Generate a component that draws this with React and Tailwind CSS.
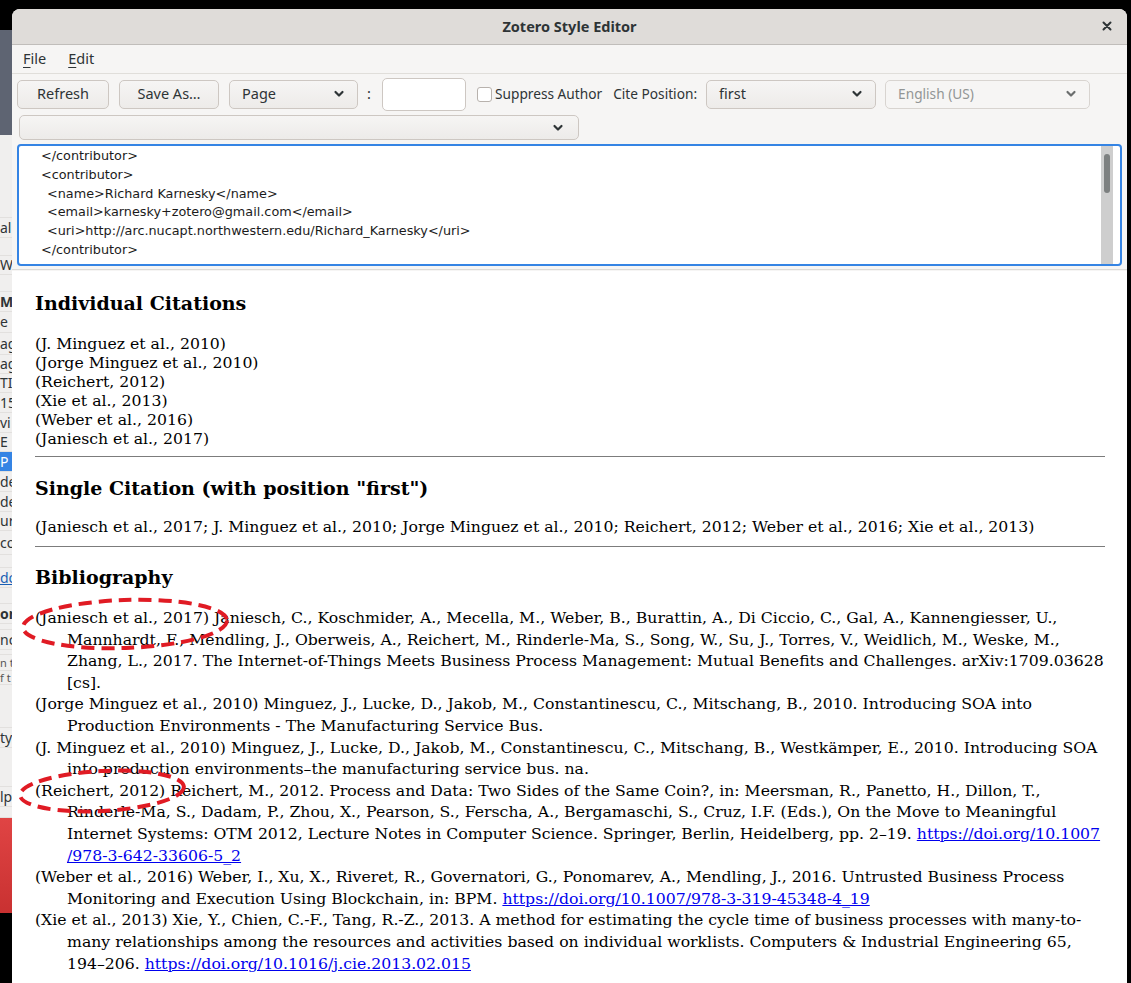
import React from "react";

const ui = { fontFamily: '"Noto Sans", "Open Sans", sans-serif' };
const serif = { fontFamily: '"DejaVu Serif", serif' };
const mono = { fontFamily: '"DejaVu Sans", sans-serif' };

function Chevron({ color = "#2e3436" }) {
  return (
    <svg width="12" height="8" viewBox="0 0 12 8" fill="none">
      <path d="M2.5 2l3.5 3.5 3.5-3.5" stroke={color} strokeWidth="2.2" strokeLinecap="round" strokeLinejoin="round" />
    </svg>
  );
}

function Select({ label, className, disabled }) {
  return (
    <div
      className={`flex items-center justify-between rounded-[5px] border px-[12px] ${
        disabled
          ? "border-[#d8d4d0] bg-[#f6f5f4] text-[#929595]"
          : "border-[#cdc7c2] bg-gradient-to-b from-[#f6f5f4] to-[#edebe9] text-[#2e3436]"
      } ${className}`}
    >
      <span>{label}</span>
      <Chevron color={disabled ? "#6b6e6e" : "#2e3436"} />
    </div>
  );
}

function Button({ children, className }) {
  return (
    <div
      className={`flex items-center justify-center rounded-[5px] border border-[#cdc7c2] bg-gradient-to-b from-[#f6f5f4] to-[#edebe9] text-[#2e3436] ${className}`}
    >
      {children}
    </div>
  );
}

// fragments of the window that sits behind, seen along the left edge
const leftFrag = [
  { h: 83, t: "" },
  { h: 20, t: "al" },
  { h: 18, t: "" },
  { h: 19, t: "Wo" },
  { h: 17, t: "" },
  { h: 20, t: "Ma", bold: true },
  { h: 21, t: "e" },
  { h: 22, t: "ag" },
  { h: 19, t: "ag" },
  { h: 19, t: "TI" },
  { h: 20, t: "15" },
  { h: 20, t: "vi" },
  { h: 19, t: "E" },
  { h: 20, t: "P", sel: true },
  { h: 20, t: "de" },
  { h: 20, t: "de" },
  { h: 19, t: "ur" },
  { h: 24, t: "co" },
  { h: 13, t: "" },
  { h: 20, t: "do", link: true },
  { h: 16, t: "" },
  { h: 20, t: "on", bold: true },
  { h: 6, t: "" },
  { h: 20, t: "ncl" },
  { h: 5, t: "" },
  { h: 16, t: "n t", small: true },
  { h: 14, t: "f t", small: true },
  { h: 43, t: "" },
  { h: 20, t: "tyl" },
  { h: 39, t: "" },
  { h: 20, t: "lp" },
  { h: 11, t: "" },
];

const individual = [
  "(J. Minguez et al., 2010)",
  "(Jorge Minguez et al., 2010)",
  "(Reichert, 2012)",
  "(Xie et al., 2013)",
  "(Weber et al., 2016)",
  "(Janiesch et al., 2017)",
];

const L = ({ href }) => <span className="text-[#0000ee] underline">{href}</span>;

const bib = [
  [
    "(Janiesch et al., 2017) Janiesch, C., Koschmider, A., Mecella, M., Weber, B., Burattin, A., Di Ciccio, C., Gal, A., Kannengiesser, U.,",
    "Mannhardt, F., Mendling, J., Oberweis, A., Reichert, M., Rinderle-Ma, S., Song, W., Su, J., Torres, V., Weidlich, M., Weske, M.,",
    "Zhang, L., 2017. The Internet-of-Things Meets Business Process Management: Mutual Benefits and Challenges. arXiv:1709.03628",
    "[cs].",
  ],
  [
    "(Jorge Minguez et al., 2010) Minguez, J., Lucke, D., Jakob, M., Constantinescu, C., Mitschang, B., 2010. Introducing SOA into",
    "Production Environments - The Manufacturing Service Bus.",
  ],
  [
    "(J. Minguez et al., 2010) Minguez, J., Lucke, D., Jakob, M., Constantinescu, C., Mitschang, B., Westkämper, E., 2010. Introducing SOA",
    "into production environments–the manufacturing service bus. na.",
  ],
  [
    "(Reichert, 2012) Reichert, M., 2012. Process and Data: Two Sides of the Same Coin?, in: Meersman, R., Panetto, H., Dillon, T.,",
    "Rinderle-Ma, S., Dadam, P., Zhou, X., Pearson, S., Ferscha, A., Bergamaschi, S., Cruz, I.F. (Eds.), On the Move to Meaningful",
    <>
      Internet Systems: OTM 2012, Lecture Notes in Computer Science. Springer, Berlin, Heidelberg, pp. 2–19.{" "}
      <L href="https://doi.org/10.1007" />
    </>,
    <L href="/978-3-642-33606-5_2" />,
  ],
  [
    "(Weber et al., 2016) Weber, I., Xu, X., Riveret, R., Governatori, G., Ponomarev, A., Mendling, J., 2016. Untrusted Business Process",
    <>
      Monitoring and Execution Using Blockchain, in: BPM. <L href="https://doi.org/10.1007/978-3-319-45348-4_19" />
    </>,
  ],
  [
    "(Xie et al., 2013) Xie, Y., Chien, C.-F., Tang, R.-Z., 2013. A method for estimating the cycle time of business processes with many-to-",
    "many relationships among the resources and activities based on individual worklists. Computers & Industrial Engineering 65,",
    <>
      194–206. <L href="https://doi.org/10.1016/j.cie.2013.02.015" />
    </>,
  ],
];

export default function App() {
  return (
    <div className="relative flex h-[983px] w-[1131px] overflow-hidden bg-black">
      {/* window behind, left edge */}
      <div className="flex w-[12px] shrink-0 flex-col overflow-hidden text-[14px] text-[#2e3436]" style={ui}>
        <div className="h-[30px] shrink-0 bg-black" />
        <div className="h-[105px] shrink-0 bg-[#5e6472]" />
        <div className="flex shrink-0 flex-col bg-[#f0efee]">
          {leftFrag.map((f, i) => (
            <div
              key={i}
              style={{ height: f.h }}
              className={`flex items-center overflow-hidden whitespace-nowrap border-b border-[#e2e0de] leading-none ${
                f.sel ? "bg-[#3584e4] text-white" : ""
              } ${f.bold ? "font-bold" : ""} ${f.link ? "text-[#1a5fb4] underline" : ""} ${
                f.small ? "text-[11px] text-[#555]" : ""
              }`}
            >
              {f.t}
            </div>
          ))}
        </div>
        <div className="h-[95px] shrink-0 bg-gradient-to-b from-[#e04444] to-[#c93131]" />
        <div className="flex-1 bg-black" />
      </div>

      {/* main window */}
      <div className="mt-[9px] flex w-[1115px] shrink-0 flex-col overflow-hidden rounded-t-[8px] bg-white" style={ui}>
        {/* title bar */}
        <div className="relative flex h-[36px] shrink-0 items-center justify-center border-b border-[#c0bdba] bg-[#dfdcd9]">
          <span className="text-[14.5px] font-bold text-[#2e3436]">Zotero Style Editor</span>
          <span className="absolute right-[12px] top-[9px]">
            <svg width="16" height="16" viewBox="0 0 16 16">
              <path d="M4.5 4.5l7 7M11.5 4.5l-7 7" stroke="#2e3436" strokeWidth="2" strokeLinecap="round" />
            </svg>
          </span>
        </div>

        {/* menu */}
        <div className="flex h-[29px] shrink-0 items-center gap-[22px] border-b border-[#e0deda] bg-[#f6f5f4] pl-[11px] text-[14.5px] text-[#2e3436]">
          <span>
            <span className="underline underline-offset-[3px]">F</span>ile
          </span>
          <span>
            <span className="underline underline-offset-[3px]">E</span>dit
          </span>
        </div>

        {/* toolbar */}
        <div className="flex shrink-0 flex-col bg-[#f6f5f4] text-[14.5px] text-[#2e3436]">
          <div className="flex h-[40px] items-center pl-[5px]">
            <Button className="h-[29px] w-[92px]">Refresh</Button>
            <Button className="ml-[10px] h-[29px] w-[100px]">Save As…</Button>
            <Select label="Page" className="ml-[10px] h-[29px] w-[129px]" />
            <span className="ml-[9px] w-[12px]">:</span>
            <div className="ml-[3px] h-[33px] w-[84px] rounded-[5px] border border-[#cdc7c2] bg-white" />
            <div className="ml-[11px] h-[15px] w-[15px] rounded-[3px] border border-[#b8b2ad] bg-white" />
            <span className="ml-[3px] text-[13.7px]">Suppress Author</span>
            <span className="ml-[11px] text-[13.7px]">Cite Position:</span>
            <Select label="first" className="ml-[9px] h-[29px] w-[170px]" />
            <Select label="English (US)" className="ml-[9px] h-[29px] w-[205px] text-[13.7px]" disabled />
          </div>
          <div className="flex h-[30px] items-start pl-[7px] pt-[1px]">
            <Select label="" className="h-[25px] w-[560px] pr-[14px]" />
          </div>
        </div>

        {/* code editor */}
        <div className="shrink-0 bg-[#f6f5f4] px-[5px] pb-[3px]">
          <div className="flex h-[122px] rounded-[4px] border-2 border-[#3584e4] bg-white">
            <div className="flex-1 pl-[22px] pt-[1px] text-[12.8px] leading-[18.8px] text-[#1b1b1b]" style={mono}>
              <div>&lt;/contributor&gt;</div>
              <div>&lt;contributor&gt;</div>
              <div className="pl-[6px]">&lt;name&gt;Richard Karnesky&lt;/name&gt;</div>
              <div className="pl-[6px]">&lt;email&gt;karnesky+zotero@gmail.com&lt;/email&gt;</div>
              <div className="pl-[6px]">&lt;uri&gt;http://arc.nucapt.northwestern.edu/Richard_Karnesky&lt;/uri&gt;</div>
              <div>&lt;/contributor&gt;</div>
            </div>
            <div className="mr-[7px] flex w-[12px] justify-center bg-[#cecece] pt-[8px]">
              <div className="h-[39px] w-[6px] rounded-full bg-[#7d8080]" />
            </div>
          </div>
        </div>
        <div className="h-[2px] shrink-0 border-t border-[#dcdad7] bg-[#f6f5f4]" />

        {/* preview */}
        <div className="flex-1 bg-white pl-[23px] pr-[22px] pt-[21px] text-[15.7px] text-black" style={serif}>
          <div className="text-[19px] font-bold leading-[22px]">Individual Citations</div>
          <div className="mt-[20px] leading-[19px]">
            {individual.map((c) => (
              <div key={c}>{c}</div>
            ))}
          </div>
          <div className="mt-[8px] border-t border-[#7c7c7c]" />
          <div className="mt-[20px] text-[19px] font-bold leading-[22px]">Single Citation (with position "first")</div>
          <div className="mt-[18px] leading-[19px]">
            (Janiesch et al., 2017; J. Minguez et al., 2010; Jorge Minguez et al., 2010; Reichert, 2012; Weber et al., 2016; Xie et al., 2013)
          </div>
          <div className="mt-[10px] border-t border-[#7c7c7c]" />
          <div className="mt-[19px] text-[19px] font-bold leading-[22px]">Bibliography</div>
          <div className="mt-[19px] leading-[21.6px]">
            {bib.map((entry, i) => (
              <div key={i}>
                {entry.map((line, j) => (
                  <div key={j} className={`whitespace-nowrap ${j > 0 ? "pl-[32px]" : ""}`}>
                    {line}
                  </div>
                ))}
              </div>
            ))}
          </div>
        </div>
      </div>

      {/* red dashed annotations */}
      <svg className="pointer-events-none absolute left-0 top-0" width="1131" height="983">
        <ellipse cx="125" cy="624" rx="102" ry="24" fill="none" stroke="#e01b24" strokeWidth="4" strokeDasharray="13 7" transform="rotate(-2 125 624)" />
        <ellipse cx="102" cy="791" rx="82" ry="20" fill="none" stroke="#e01b24" strokeWidth="4" strokeDasharray="13 7" transform="rotate(-3 102 791)" />
      </svg>
    </div>
  );
}
